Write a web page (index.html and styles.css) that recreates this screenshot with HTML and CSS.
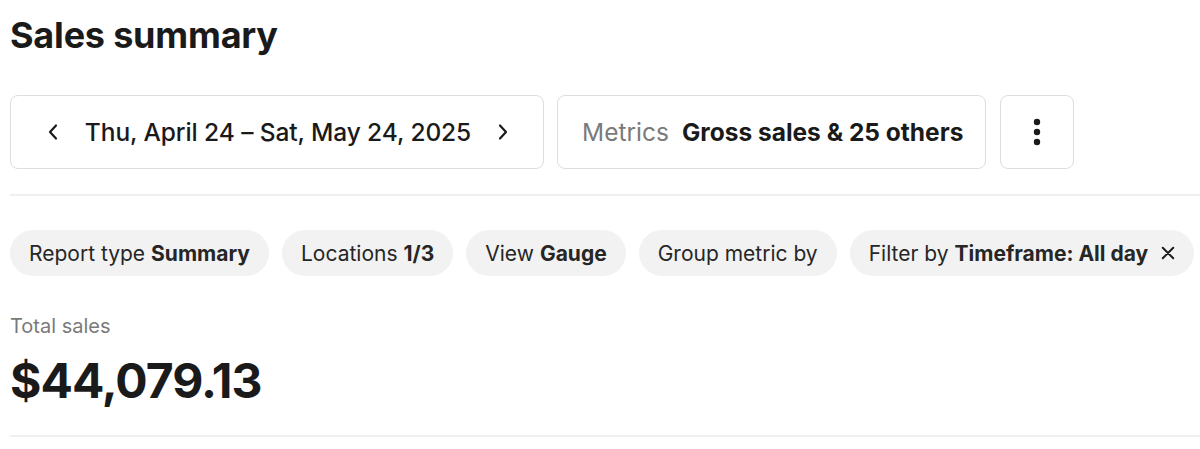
FILE: index.html
```html
<!DOCTYPE html>
<html>
<head>
<meta charset="utf-8">
<link rel="stylesheet" href="styles.css">
</head>
<body>
<div class="page">
  <h1 class="title">Sales summary</h1>
  <div class="toolbar">
    <div class="btn date">
      <svg class="chev" viewBox="0 0 20 20" width="20" height="20"><path d="M13 3.5 L7 10 L13 16.5" fill="none" stroke="#1a1a1a" stroke-width="2.2" stroke-linecap="round" stroke-linejoin="round"/></svg>
      <span class="date-text">Thu, April 24 – Sat, May 24, 2025</span>
      <svg class="chev" viewBox="0 0 20 20" width="20" height="20"><path d="M7 3.5 L13 10 L7 16.5" fill="none" stroke="#1a1a1a" stroke-width="2.2" stroke-linecap="round" stroke-linejoin="round"/></svg>
    </div>
    <div class="btn metrics">
      <span class="muted">Metrics</span>
      <span class="strong">Gross sales &amp; 25 others</span>
    </div>
    <div class="btn more">
      <svg viewBox="0 0 8 28" width="8" height="28"><circle cx="4" cy="4" r="3.2" fill="#1a1a1a"/><circle cx="4" cy="14" r="3.2" fill="#1a1a1a"/><circle cx="4" cy="24" r="3.2" fill="#1a1a1a"/></svg>
    </div>
  </div>
  <div class="divider"></div>
  <div class="chips">
    <div class="chip">Report type <b>Summary</b></div>
    <div class="chip">Locations <b>1/3</b></div>
    <div class="chip">View <b>Gauge</b></div>
    <div class="chip">Group metric by</div>
    <div class="chip">Filter by <b>Timeframe: All day</b>
      <svg class="x" viewBox="0 0 16 16" width="14" height="14"><path d="M2 2 L14 14 M14 2 L2 14" stroke="#1a1a1a" stroke-width="2.2" stroke-linecap="round"/></svg>
    </div>
  </div>
  <div class="stat">
    <div class="stat-label">Total sales</div>
    <div class="stat-value">$44,079.13</div>
  </div>
  <div class="divider bottom"></div>
</div>
</body>
</html>
```

FILE: styles.css
```css
html, body {
  margin: 0;
  padding: 0;
  background: #fff;
}
body {
  font-family: Inter, "Liberation Sans", sans-serif;
  color: #1a1a1a;
}
.page {
  padding: 0 0 0 10px;
}
.title {
  margin: 0;
  padding-top: 13px;
  font-size: 36px;
  font-weight: 700;
  line-height: 44px;
  letter-spacing: -0.2px;
}
.toolbar {
  display: flex;
  gap: 13px;
  margin-top: 38px;
}
.btn {
  box-sizing: border-box;
  height: 74px;
  border: 1.5px solid #dedede;
  border-radius: 8px;
  display: flex;
  align-items: center;
}
.date {
  width: 534px;
  padding: 0 30px 0 32px;
  justify-content: space-between;
}
.date-text {
  font-size: 24.5px;
  font-weight: 500;
  letter-spacing: -0.1px;
}
.metrics {
  width: 429px;
  padding-left: 24px;
  gap: 13px;
  font-size: 24.5px;
}
.muted {
  color: #7a7a7a;
}
.strong {
  font-weight: 700;
}
.more {
  width: 74px;
  justify-content: center;
  margin-left: 1px;
}
.divider {
  height: 2px;
  background: #f0f0f0;
  margin-top: 25px;
}
.chips {
  display: flex;
  gap: 13px;
  margin-top: 34px;
}
.chip {
  height: 46px;
  box-sizing: border-box;
  padding: 0 19px;
  background: #f2f2f2;
  border-radius: 23px;
  display: flex;
  align-items: center;
  font-size: 21px;
  color: #262626;
  white-space: nowrap;
}
.chip b {
  font-weight: 700;
  margin-left: 6px;
}
.chip .x {
  margin-left: 13px;
}
.stat {
  margin-top: 36px;
}
.stat-label {
  font-size: 20px;
  color: #7a7a7a;
  line-height: 28px;
}
.stat-value {
  font-size: 48px;
  font-weight: 700;
  letter-spacing: -1px;
  line-height: 56px;
  margin-top: 13px;
}
.divider.bottom {
  margin-top: 26px;
}
```
